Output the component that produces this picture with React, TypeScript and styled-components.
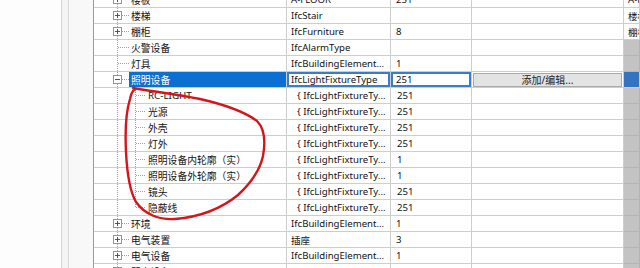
import React from "react";
import styled, { createGlobalStyle, css } from "styled-components";

const Global = createGlobalStyle`
  html, body { margin: 0; padding: 0; background: #fff; }
  body {
    width: 640px; height: 268px; overflow: hidden;
    font-family: "Noto Sans", "Noto Sans CJK SC", sans-serif;
  }
`;

const Page = styled.div`
  position: relative;
  display: flex;
  width: 640px;
  height: 268px;
  overflow: hidden;
  background: #fff;
`;

const LeftPane = styled.div`
  flex: none;
  width: 61px;
  background: #fdfdfd;
  border-right: 1px solid #d4d4d4;
`;

const Gutter = styled.div`
  flex: none;
  width: 6px;
  background: #f4f4f4;
  border-right: 1px solid #d8d8d8;
`;

const Margin = styled.div`
  flex: none;
  width: 24px;
  background: #f8f8f8;
  border-right: 1px solid #9a9a9a;
`;

const Viewport = styled.div`
  flex: 1;
  overflow: hidden;
`;

const Content = styled.div`
  margin-top: -8px;
`;

const Row = styled.div`
  display: grid;
  grid-template-columns: 193px 104px 81px 152px 1fr;
  height: 16px;
`;

type Tone = "white" | "gray" | "blue";

const Cell = styled.div<{ $tone?: Tone; $focus?: boolean; $pad?: number }>`
  box-sizing: border-box;
  height: 16px;
  border-right: 1px solid #cdcdcd;
  border-bottom: 1px solid #cdcdcd;
  display: flex;
  align-items: center;
  overflow: hidden;
  white-space: nowrap;
  font-size: 9.6px;
  color: #111;
  padding-left: ${(p) => p.$pad ?? 4}px;
  background: ${(p) =>
    p.$tone === "gray" ? "#c3c3c3" : p.$tone === "blue" ? "#3473bf" : "#fff"};
  ${(p) =>
    p.$tone === "gray" &&
    css`
      border-bottom-color: #b4b4b4;
      border-right-color: #b4b4b4;
    `}
  ${(p) =>
    p.$focus &&
    css`
      box-shadow: inset 0 0 0 2px #3a7cc8;
    `}
`;

const TreeCell = styled(Cell)`
  padding-left: 0;
`;

const Label = styled.span<{ $selected?: boolean }>`
  flex: 1;
  align-self: stretch;
  display: flex;
  align-items: center;
  padding-left: 2px;
  font-size: 9.8px;
  color: ${(p) => (p.$selected ? "#fff" : "#111")};
  background: ${(p) => (p.$selected ? "#0b70d2" : "transparent")};
`;

const EditButton = styled.div`
  box-sizing: border-box;
  margin: 0 1px 0 -3px;
  flex: 1;
  height: 14px;
  border: 1px solid #a9a9a9;
  background: #e3e3e3;
  font-size: 10px;
  color: #222;
  display: flex;
  align-items: center;
  justify-content: center;
`;

const Annotation = styled.svg`
  position: absolute;
  left: 0;
  top: 0;
  pointer-events: none;
`;

type Kind = "plus" | "minus" | "leaf" | "child" | "lastChild";

type RowData = {
  name: string;
  kind: Kind;
  type: string;
  count: string;
  extra?: string;
  selected?: boolean;
};

const rows: RowData[] = [
  { name: "楼板", kind: "plus", type: "A-FLOOR", count: "251", extra: "A-FLOOR" },
  { name: "楼梯", kind: "plus", type: "IfcStair", count: "", extra: "楼梯" },
  { name: "棚柜", kind: "plus", type: "IfcFurniture", count: "8", extra: "棚柜" },
  { name: "火警设备", kind: "leaf", type: "IfcAlarmType", count: "" },
  { name: "灯具", kind: "leaf", type: "IfcBuildingElement...", count: "1" },
  { name: "照明设备", kind: "minus", type: "IfcLightFixtureType", count: "251", selected: true },
  { name: "RC-LIGHT", kind: "child", type: "{ IfcLightFixtureTy...", count: "251" },
  { name: "光源", kind: "child", type: "{ IfcLightFixtureTy...", count: "251" },
  { name: "外壳", kind: "child", type: "{ IfcLightFixtureTy...", count: "251" },
  { name: "灯外", kind: "child", type: "{ IfcLightFixtureTy...", count: "251" },
  { name: "照明设备内轮廓（实）", kind: "child", type: "{ IfcLightFixtureTy...", count: "1" },
  { name: "照明设备外轮廓（实）", kind: "child", type: "{ IfcLightFixtureTy...", count: "1" },
  { name: "镜头", kind: "child", type: "{ IfcLightFixtureTy...", count: "251" },
  { name: "隐蔽线", kind: "lastChild", type: "{ IfcLightFixtureTy...", count: "251" },
  { name: "环境", kind: "plus", type: "IfcBuildingElement...", count: "1" },
  { name: "电气装置", kind: "plus", type: "插座", count: "3" },
  { name: "电气设备", kind: "plus", type: "IfcBuildingElement...", count: "1" },
  { name: "弱电设备", kind: "plus", type: "IfcBuildingElement...", count: "1" },
];

const LINE = "#a3a3a3";

function Connector({ kind }: { kind: Kind }) {
  const isChild = kind === "child" || kind === "lastChild";
  const w = isChild ? 52 : 35;
  return (
    <svg width={w} height={15} style={{ flex: "none", display: "block" }}>
      <line x1={23.5} y1={0} x2={23.5} y2={15} stroke={LINE} strokeDasharray="1 1" />
      {isChild ? (
        <>
          <line
            x1={41.5}
            y1={0}
            x2={41.5}
            y2={kind === "lastChild" ? 7.5 : 15}
            stroke={LINE}
            strokeDasharray="1 1"
          />
          <line x1={42} y1={7.5} x2={52} y2={7.5} stroke={LINE} strokeDasharray="1 1" />
        </>
      ) : (
        <line
          x1={kind === "leaf" ? 24 : 28}
          y1={7.5}
          x2={35}
          y2={7.5}
          stroke={LINE}
          strokeDasharray="1 1"
        />
      )}
      {(kind === "plus" || kind === "minus") && (
        <>
          <rect x={19.5} y={3.5} width={8} height={8} fill="#fff" stroke="#949494" />
          <line x1={21} y1={7.5} x2={26} y2={7.5} stroke="#555" />
          {kind === "plus" && <line x1={23.5} y1={5} x2={23.5} y2={10} stroke="#555" />}
        </>
      )}
    </svg>
  );
}

function TableRow({ r }: { r: RowData }) {
  const isChild = r.kind === "child" || r.kind === "lastChild";
  const fifthTone: Tone = r.selected ? "blue" : r.extra ? "white" : "gray";
  return (
    <Row>
      <TreeCell>
        <Connector kind={r.kind} />
        <Label $selected={r.selected}>{r.name}</Label>
      </TreeCell>
      <Cell $focus={r.selected} $pad={isChild ? 10 : 4}>
        {r.type}
      </Cell>
      <Cell $focus={r.selected} $pad={isChild ? 6 : 5}>
        {r.count}
      </Cell>
      <Cell>{r.selected && <EditButton>添加/编辑...</EditButton>}</Cell>
      <Cell $tone={fifthTone}>{r.extra}</Cell>
    </Row>
  );
}

export default function App() {
  return (
    <>
      <Global />
      <Page>
        <LeftPane />
        <Gutter />
        <Margin />
        <Viewport>
          <Content>
            {rows.map((r, i) => (
              <TableRow key={i} r={r} />
            ))}
          </Content>
        </Viewport>
        <Annotation width={640} height={268} viewBox="0 0 640 268">
          <path
            d="M133 88 C 150 91, 175 94, 200 99 C 222 104, 245 112, 257 121 C 266 130, 265 145, 263 156 C 260 170, 252 182, 238 195 C 222 208, 200 217, 175 219 C 160 220, 145 215, 136 202 C 129 190, 127 172, 126 152 C 125 132, 126 112, 130 99 C 131 94, 132 91, 135 89"
            fill="none"
            stroke="#d5141c"
            strokeWidth={2.4}
            strokeLinecap="round"
          />
        </Annotation>
      </Page>
    </>
  );
}
